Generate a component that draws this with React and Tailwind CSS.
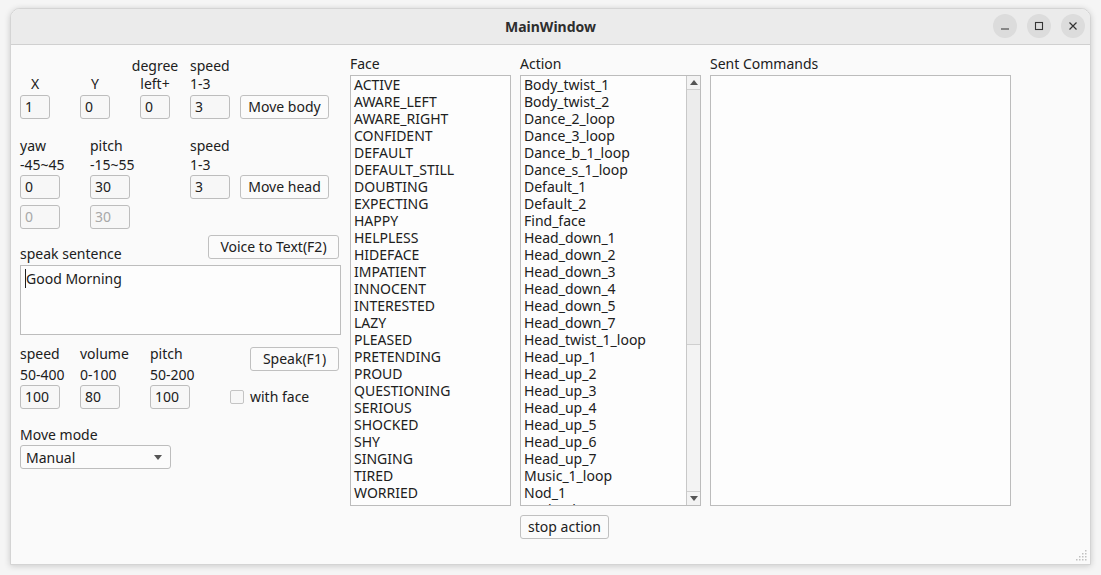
const faces = [
  "ACTIVE", "AWARE_LEFT", "AWARE_RIGHT", "CONFIDENT", "DEFAULT", "DEFAULT_STILL",
  "DOUBTING", "EXPECTING", "HAPPY", "HELPLESS", "HIDEFACE", "IMPATIENT", "INNOCENT",
  "INTERESTED", "LAZY", "PLEASED", "PRETENDING", "PROUD", "QUESTIONING", "SERIOUS",
  "SHOCKED", "SHY", "SINGING", "TIRED", "WORRIED",
];

const actions = [
  "Body_twist_1", "Body_twist_2", "Dance_2_loop", "Dance_3_loop", "Dance_b_1_loop",
  "Dance_s_1_loop", "Default_1", "Default_2", "Find_face", "Head_down_1", "Head_down_2",
  "Head_down_3", "Head_down_4", "Head_down_5", "Head_down_7", "Head_twist_1_loop",
  "Head_up_1", "Head_up_2", "Head_up_3", "Head_up_4", "Head_up_5", "Head_up_6",
  "Head_up_7", "Music_1_loop", "Nod_1", "Nod_2_loop",
];

function Field({ value, w = "w-[40px]", disabled }) {
  return (
    <div
      className={`${w} h-[24px] shrink-0 rounded-[3px] border border-[#bdbdbd] bg-[#f7f7f7] pl-[4px] leading-[22px] ${
        disabled ? "text-[#a8a8a8]" : "text-[#202020]"
      }`}
    >
      {value}
    </div>
  );
}

function Btn({ children, className = "" }) {
  return (
    <div
      className={`h-[24px] shrink-0 rounded-[3px] border border-[#c0c0c0] bg-[#fbfbfb] text-center leading-[22px] text-[#202020] ${className}`}
    >
      {children}
    </div>
  );
}

export default function App() {
  return (
    <div
      className="h-[575px] w-[1101px] bg-[#f5f5f5] pt-[8px] pl-[10px] text-[14px] text-[#202020]"
      style={{ fontFamily: '"Noto Sans", "Open Sans", sans-serif' }}
    >
      <div className="flex h-[557px] w-[1081px] flex-col overflow-hidden rounded-t-[10px] border border-[#d4d4d4] bg-[#fafafa] shadow-[0_1px_6px_rgba(0,0,0,0.18)]">
        {/* title bar */}
        <div className="relative flex h-[36px] shrink-0 items-center justify-center border-b border-[#d0d0d0] bg-[#ebebeb]">
          <span className="text-[14px] font-bold text-[#2e2e2e]">MainWindow</span>
          <div className="absolute right-[5px] top-[5px] flex gap-[10px]">
            <div className="flex h-[24px] w-[24px] items-center justify-center rounded-full bg-[#dcdcdc]">
              <svg width="10" height="10" viewBox="0 0 10 10">
                <path d="M1 8h8" stroke="#333" strokeWidth="1.2" />
              </svg>
            </div>
            <div className="flex h-[24px] w-[24px] items-center justify-center rounded-full bg-[#dcdcdc]">
              <svg width="10" height="10" viewBox="0 0 10 10">
                <rect x="1.5" y="1.5" width="7" height="7" fill="none" stroke="#333" strokeWidth="1.1" />
              </svg>
            </div>
            <div className="flex h-[24px] w-[24px] items-center justify-center rounded-full bg-[#dcdcdc]">
              <svg width="10" height="10" viewBox="0 0 10 10">
                <path d="M1.5 1.5l7 7M8.5 1.5l-7 7" stroke="#333" strokeWidth="1.2" />
              </svg>
            </div>
          </div>
        </div>

        {/* content */}
        <div className="relative flex flex-1 pl-[9px]">
          {/* left controls */}
          <div className="flex w-[330px] flex-col">
            {/* body */}
            <div className="mt-[12px] flex items-end">
              <div className="flex w-[30px] flex-col items-center">
                <div className="h-[18px]" />
                <div className="h-[18px] leading-[18px]">X</div>
                <div className="mt-[2px]"><Field value="1" w="w-[30px]" /></div>
              </div>
              <div className="ml-[30px] flex w-[30px] flex-col items-center">
                <div className="h-[18px]" />
                <div className="h-[18px] leading-[18px]">Y</div>
                <div className="mt-[2px]"><Field value="0" w="w-[30px]" /></div>
              </div>
              <div className="ml-[30px] flex w-[30px] flex-col items-center">
                <div className="h-[18px] whitespace-nowrap leading-[18px]">degree</div>
                <div className="h-[18px] whitespace-nowrap leading-[18px]">left+</div>
                <div className="mt-[2px]"><Field value="0" w="w-[30px]" /></div>
              </div>
              <div className="ml-[20px] flex w-[40px] flex-col">
                <div className="h-[18px] leading-[18px]">speed</div>
                <div className="h-[18px] leading-[18px]">1-3</div>
                <div className="mt-[2px]"><Field value="3" /></div>
              </div>
              <Btn className="ml-[10px] w-[89px]">Move body</Btn>
            </div>

            {/* head */}
            <div className="mt-[17px] flex items-end">
              <div className="flex w-[40px] flex-col">
                <div className="h-[19px] leading-[19px]">yaw</div>
                <div className="h-[19px] whitespace-nowrap leading-[19px]">-45~45</div>
                <div className="mt-[1px]"><Field value="0" /></div>
              </div>
              <div className="ml-[30px] flex w-[40px] flex-col">
                <div className="h-[19px] leading-[19px]">pitch</div>
                <div className="h-[19px] whitespace-nowrap leading-[19px]">-15~55</div>
                <div className="mt-[1px]"><Field value="30" /></div>
              </div>
              <div className="ml-[60px] flex w-[40px] flex-col">
                <div className="h-[19px] leading-[19px]">speed</div>
                <div className="h-[19px] leading-[19px]">1-3</div>
                <div className="mt-[1px]"><Field value="3" /></div>
              </div>
              <Btn className="ml-[10px] w-[89px]">Move head</Btn>
            </div>
            <div className="mt-[6px] flex gap-[30px]">
              <Field value="0" disabled />
              <Field value="30" disabled />
            </div>

            {/* speak */}
            <div className="mt-[6px] flex h-[24px] w-[319px] items-start justify-between">
              <div className="mt-[10px] leading-[18px]">speak sentence</div>
              <Btn className="w-[131px]">Voice to Text(F2)</Btn>
            </div>
            <div className="mt-[6px] h-[70px] w-[321px] border border-[#bdbdbd] bg-[#fdfdfd] px-[4px] pt-[4px] leading-[18px]">
              <span className="border-l border-[#202020]">Good Morning</span>
            </div>

            <div className="mt-[8px] flex">
              <div className="flex w-[60px] flex-col">
                <div className="h-[22px] leading-[22px]">speed</div>
                <div className="h-[20px] leading-[20px]">50-400</div>
                <Field value="100" />
              </div>
              <div className="flex w-[70px] flex-col">
                <div className="h-[22px] leading-[22px]">volume</div>
                <div className="h-[20px] leading-[20px]">0-100</div>
                <Field value="80" />
              </div>
              <div className="flex w-[80px] flex-col">
                <div className="h-[22px] leading-[22px]">pitch</div>
                <div className="h-[20px] leading-[20px]">50-200</div>
                <Field value="100" />
              </div>
              <div className="flex flex-col">
                <Btn className="ml-[20px] mt-[4px] w-[89px]">Speak(F1)</Btn>
                <div className="mt-[17px] flex items-center">
                  <div className="h-[14px] w-[14px] rounded-[2px] border border-[#c4c4c4] bg-[#f7f7f7]" />
                  <span className="ml-[6px] leading-[18px]">with face</span>
                </div>
              </div>
            </div>

            <div className="mt-[17px] h-[18px] leading-[18px]">Move mode</div>
            <div className="mt-[1px] flex h-[24px] w-[151px] items-center justify-between rounded-[3px] border border-[#bdbdbd] bg-[#fbfbfb] pl-[5px] pr-[8px]">
              <span>Manual</span>
              <svg width="8" height="5" viewBox="0 0 8 5">
                <path d="M0 0h8L4 5z" fill="#555" />
              </svg>
            </div>
          </div>

          {/* face */}
          <div className="flex flex-col pt-[10px]">
            <div className="h-[18px] leading-[18px]">Face</div>
            <div className="mt-[2px] h-[431px] w-[161px] overflow-hidden border border-[#bcbcbc] bg-[#fdfdfd] px-[3px]">
              {faces.map((f) => (
                <div key={f} className="h-[17px] leading-[17px]">{f}</div>
              ))}
            </div>
          </div>

          {/* action */}
          <div className="ml-[9px] flex flex-col pt-[10px]">
            <div className="h-[18px] leading-[18px]">Action</div>
            <div className="mt-[2px] flex h-[431px] w-[181px] overflow-hidden border border-[#bcbcbc] bg-[#fdfdfd]">
              <div className="flex-1 overflow-hidden px-[3px]">
                {actions.map((a) => (
                  <div key={a} className="h-[17px] whitespace-nowrap leading-[17px]">{a}</div>
                ))}
              </div>
              <div className="flex w-[14px] flex-col border-l border-[#c8c8c8] bg-[#f3f3f3]">
                <div className="flex h-[14px] items-center justify-center border-b border-[#d0d0d0]">
                  <svg width="8" height="5" viewBox="0 0 8 5">
                    <path d="M0 5h8L4 0z" fill="#555" />
                  </svg>
                </div>
                <div className="h-[255px] border-b border-[#cfcfcf] bg-[#ececec]" />
                <div className="flex-1" />
                <div className="flex h-[14px] items-center justify-center border-t border-[#d0d0d0]">
                  <svg width="8" height="5" viewBox="0 0 8 5">
                    <path d="M0 0h8L4 5z" fill="#555" />
                  </svg>
                </div>
              </div>
            </div>
            <Btn className="mt-[9px] w-[89px]">stop action</Btn>
          </div>

          {/* sent commands */}
          <div className="ml-[9px] flex flex-col pt-[10px]">
            <div className="h-[18px] leading-[18px]">Sent Commands</div>
            <div className="mt-[2px] h-[431px] w-[301px] border border-[#bcbcbc] bg-[#fdfdfd]" />
          </div>

          {/* resize grip */}
          <svg className="absolute bottom-[3px] right-[3px]" width="11" height="11" viewBox="0 0 11 11">
            {[[9, 1], [6, 4], [9, 4], [3, 7], [6, 7], [9, 7], [0, 10], [3, 10], [6, 10], [9, 10]].map(([x, y]) => (
              <rect key={`${x}-${y}`} x={x} y={y - 1} width="1.5" height="1.5" fill="#c0c0c0" />
            ))}
          </svg>
        </div>
      </div>
    </div>
  );
}
